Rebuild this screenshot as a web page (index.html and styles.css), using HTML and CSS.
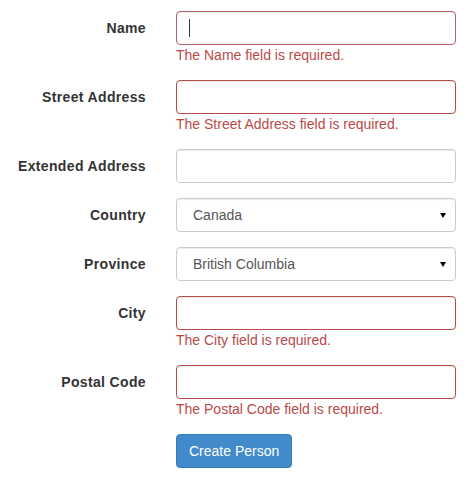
FILE: index.html
```html
<!DOCTYPE html>
<html>
<head>
<meta charset="utf-8">
<link rel="stylesheet" href="styles.css">
</head>
<body>
<form class="form">
  <div class="group">
    <label class="label">Name</label>
    <div class="control">
      <div class="field">
        <input class="input input-error input-focus" type="text">
        <span class="caret"></span>
      </div>
      <span class="error">The Name field is required.</span>
    </div>
  </div>
  <div class="group">
    <label class="label">Street Address</label>
    <div class="control">
      <input class="input input-error" type="text">
      <span class="error">The Street Address field is required.</span>
    </div>
  </div>
  <div class="group">
    <label class="label">Extended Address</label>
    <div class="control">
      <input class="input" type="text">
    </div>
  </div>
  <div class="group">
    <label class="label">Country</label>
    <div class="control">
      <div class="select-wrap">
        <select class="input select"><option>Canada</option></select>
      </div>
    </div>
  </div>
  <div class="group">
    <label class="label">Province</label>
    <div class="control">
      <div class="select-wrap">
        <select class="input select"><option>British Columbia</option></select>
      </div>
    </div>
  </div>
  <div class="group">
    <label class="label">City</label>
    <div class="control">
      <input class="input input-error" type="text">
      <span class="error">The City field is required.</span>
    </div>
  </div>
  <div class="group">
    <label class="label">Postal Code</label>
    <div class="control">
      <input class="input input-error" type="text">
      <span class="error">The Postal Code field is required.</span>
    </div>
  </div>
  <div class="group">
    <div class="label"></div>
    <div class="control">
      <button class="btn" type="button">Create Person</button>
    </div>
  </div>
</form>
</body>
</html>
```
FILE: styles.css
```css
html, body {
  margin: 0;
  padding: 0;
  background: #fff;
}
body {
  font-family: "Liberation Sans", Arial, Helvetica, sans-serif;
  font-size: 14px;
  line-height: 20px;
  color: #333;
}
.form {
  padding-top: 11px;
}
.group {
  display: flex;
  margin-bottom: 15px;
}
.label {
  width: 146px;
  flex: none;
  margin-right: 30px;
  padding-top: 7px;
  text-align: right;
  font-weight: bold;
  letter-spacing: 0.35px;
  color: #333;
}
.control {
  width: 280px;
  flex: none;
}
.field {
  position: relative;
}
.input {
  display: block;
  box-sizing: border-box;
  width: 280px;
  height: 34px;
  margin: 0;
  padding: 6px 12px;
  font-family: inherit;
  font-size: 14px;
  line-height: 20px;
  color: #555;
  background: #fff;
  border: 1px solid #ccc;
  border-radius: 4px;
  box-shadow: inset 0 1px 1px rgba(0,0,0,.075);
  outline: none;
}
.input-error {
  border-color: #b94a48;
}
.input-focus {
  border-color: #b9626c;
}
.caret {
  position: absolute;
  left: 13px;
  top: 8px;
  width: 1px;
  height: 18px;
  background: #333;
}
.error {
  display: block;
  color: #b94a48;
}
.select-wrap {
  position: relative;
}
.select {
  -webkit-appearance: none;
  appearance: none;
  padding-left: 16px;
}
.select-wrap::after {
  content: "";
  position: absolute;
  right: 10px;
  top: 15px;
  border-left: 3px solid transparent;
  border-right: 3px solid transparent;
  border-top: 5px solid #000;
}
.btn {
  display: inline-block;
  box-sizing: border-box;
  height: 34px;
  padding: 6px 12px;
  margin: 0;
  font-family: inherit;
  font-size: 14px;
  line-height: 20px;
  color: #fff;
  background: #428bca;
  border: 1px solid #357ebd;
  border-radius: 4px;
}
```
